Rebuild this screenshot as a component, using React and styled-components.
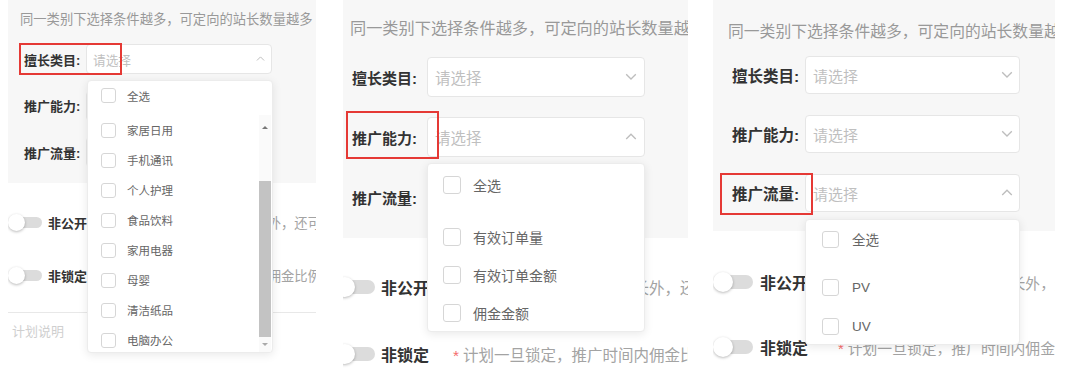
import React from 'react';
import styled, { createGlobalStyle } from 'styled-components';

const GlobalStyle = createGlobalStyle`
  html, body {
    margin: 0;
    padding: 0;
    background: #fff;
  }
  body {
    font-family: "Liberation Sans", "Noto Sans CJK SC", sans-serif;
  }
`;

// three screenshots of the same filter form, each at its own scale
const SMALL = {
  left: 8, width: 308, grayH: 183,
  hintTop: 10, hintLH: 20, hintSize: 13.3, hintPad: 12,
  rowsTop: 14, rowGap: 16.5, pad: 16, labelW: 62, labelSize: 13,
  selectW: 186, selectH: 30, selectPadL: 6, selectPadR: 6, phSize: 12.7, chevW: 9,
  swTop: 29, swGap: 33, swH: 20, swLeft: 0, tgW: 34, knob: 17, track: 11,
  swLabelGap: 6, swLabelSize: 13, swLabelW: 51, descSize: 13.3,
};

const MEDIUM = {
  left: 27, width: 345, grayH: 238,
  hintTop: 17, hintLH: 22, hintSize: 16.2, hintPad: 7,
  rowsTop: 18, rowGap: 20, pad: 9, labelW: 75, labelSize: 15,
  selectW: 218, selectH: 40, selectPadL: 7, selectPadR: 7, phSize: 15.5, chevW: 12,
  swTop: 37, swGap: 43, swH: 24, swLeft: -8, tgW: 40, knob: 20, track: 14,
  swLabelGap: 6, swLabelSize: 16, swLabelW: 72, descSize: 15.5,
};

const LARGE = {
  left: 25, width: 342, grayH: 231,
  hintTop: 21, hintLH: 22, hintSize: 15.8, hintPad: 15,
  rowsTop: 13, rowGap: 21, pad: 19, labelW: 73, labelSize: 15.5,
  selectW: 215, selectH: 38, selectPadL: 7, selectPadR: 6, phSize: 15, chevW: 12,
  swTop: 39, swGap: 41, swH: 24, swLeft: 0, tgW: 40, knob: 20, track: 14,
  swLabelGap: 7, swLabelSize: 16, swLabelW: 78, descSize: 14.8,
};

const LABELS = ['擅长类目:', '推广能力:', '推广流量:'];

const CATEGORIES = ['家居日用', '手机通讯', '个人护理', '食品饮料', '家用电器', '母婴', '清洁纸品', '电脑办公'];

const PANELS = [
  {
    m: SMALL,
    open: 0,
    hl: { left: -5, top: -1, w: 103, h: 32 },
    menu: { top: 80, left: 79, w: 186, h: 273, headH: 29, gap: 5, itemH: 30, box: 15, padL: 13, textGap: 11, font: 11.5 },
    options: CATEGORIES,
    scroll: true,
    note: true,
  },
  {
    m: MEDIUM,
    open: 1,
    hl: { left: -6, top: -6, w: 93, h: 48 },
    menu: { top: 163, left: 84, w: 218, h: 169, headH: 42, gap: 12, itemH: 38, box: 18, padL: 15, textGap: 12, font: 14 },
    options: ['有效订单量', '有效订单金额', '佣金金额'],
  },
  {
    m: LARGE,
    open: 2,
    hl: { left: -12, top: -1, w: 93, h: 42 },
    menu: { top: 219, left: 92, w: 215, h: 126, headH: 38, gap: 10, itemH: 39, box: 17, padL: 16, textGap: 13, font: 13.5 },
    options: ['PV', 'UV'],
  },
];

const SWITCHES = [
  { label: '非公开', desc: '计划非公开，除定向的站长外，还可以通过链接申请加入' },
  { label: '非锁定', desc: '计划一旦锁定，推广时间内佣金比例不可修改' },
];

const Screen = styled.div`
  display: flex;
  width: 1080px;
  height: 377px;
  overflow: hidden;
  background: #fff;
`;

const Panel = styled.div`
  position: relative;
  flex-shrink: 0;
  width: ${p => p.$m.width}px;
  height: 377px;
  margin-left: ${p => p.$m.left}px;
  overflow: hidden;
`;

const FilterBox = styled.div`
  box-sizing: border-box;
  height: ${p => p.$m.grayH}px;
  padding-top: ${p => p.$m.hintTop}px;
  background: #f7f7f7;
`;

const Hint = styled.div`
  padding-left: ${p => p.$m.hintPad}px;
  font-size: ${p => p.$m.hintSize}px;
  line-height: ${p => p.$m.hintLH}px;
  color: #999;
  white-space: nowrap;
`;

const Rows = styled.div`
  display: flex;
  flex-direction: column;
  gap: ${p => p.$m.rowGap}px;
  margin-top: ${p => p.$m.rowsTop}px;
  padding-left: ${p => p.$m.pad}px;
`;

const Row = styled.div`
  position: relative;
  display: flex;
  align-items: center;
  height: ${p => p.$m.selectH}px;
`;

const Label = styled.span`
  flex-shrink: 0;
  width: ${p => p.$m.labelW}px;
  font-size: ${p => p.$m.labelSize}px;
  font-weight: 600;
  color: #333;
  white-space: nowrap;
`;

const Select = styled.div`
  box-sizing: border-box;
  display: flex;
  align-items: center;
  justify-content: space-between;
  flex-shrink: 0;
  width: ${p => p.$m.selectW}px;
  height: 100%;
  padding: 0 ${p => p.$m.selectPadR}px 0 ${p => p.$m.selectPadL}px;
  background: #fff;
  border: 1px solid #e6e6e6;
  border-radius: 4px;
  font-size: ${p => p.$m.phSize}px;
  color: #bfbfbf;
`;

const Highlight = styled.span`
  position: absolute;
  left: ${p => p.$hl.left}px;
  top: ${p => p.$hl.top}px;
  width: ${p => p.$hl.w}px;
  height: ${p => p.$hl.h}px;
  box-sizing: border-box;
  border: 2px solid #e53935;
  pointer-events: none;
`;

const Switches = styled.div`
  display: flex;
  flex-direction: column;
  gap: ${p => p.$m.swGap}px;
  padding-top: ${p => p.$m.swTop}px;
  margin-left: ${p => p.$m.swLeft}px;
`;

const SwitchRow = styled.div`
  display: flex;
  align-items: center;
  height: ${p => p.$m.swH}px;
  white-space: nowrap;
`;

const Toggle = styled.span`
  position: relative;
  flex-shrink: 0;
  width: ${p => p.$m.tgW}px;
  height: ${p => p.$m.knob}px;

  &::before {
    content: '';
    position: absolute;
    left: ${p => Math.round(p.$m.knob * 0.4)}px;
    right: 0;
    top: ${p => (p.$m.knob - p.$m.track) / 2}px;
    height: ${p => p.$m.track}px;
    border-radius: ${p => p.$m.track / 2}px;
    background: #dcdcdc;
  }

  &::after {
    content: '';
    position: absolute;
    left: 0;
    top: 0;
    width: ${p => p.$m.knob}px;
    height: ${p => p.$m.knob}px;
    border-radius: 50%;
    background: #fff;
    box-shadow: 0 1px 3px rgba(0, 0, 0, 0.28);
  }
`;

const SwitchLabel = styled.span`
  flex-shrink: 0;
  width: ${p => p.$m.swLabelW}px;
  margin-left: ${p => p.$m.swLabelGap}px;
  font-size: ${p => p.$m.swLabelSize}px;
  font-weight: 600;
  color: #333;
`;

const Desc = styled.span`
  font-size: ${p => p.$m.descSize}px;
  color: #a3a3a3;
`;

const Star = styled.span`
  margin-right: 4px;
  color: #f56c6c;
`;

const Note = styled.div`
  margin-top: 27px;
  padding: 9px 4px 0;
  border-top: 1px solid #e8e8e8;
  font-size: 13px;
  line-height: 20px;
  color: #cfcfcf;
`;

const Menu = styled.div`
  position: absolute;
  top: ${p => p.$d.top}px;
  left: ${p => p.$d.left}px;
  width: ${p => p.$d.w}px;
  height: ${p => p.$d.h}px;
  box-sizing: border-box;
  display: flex;
  flex-direction: column;
  overflow: hidden;
  background: #fff;
  border: 1px solid #ececec;
  border-radius: 4px;
  box-shadow: 0 2px 10px rgba(0, 0, 0, 0.09);
`;

const Option = styled.div`
  display: flex;
  align-items: center;
  flex-shrink: 0;
  height: ${p => p.$h}px;
  padding-left: ${p => p.$d.padL}px;
`;

const Check = styled.span`
  box-sizing: border-box;
  flex-shrink: 0;
  width: ${p => p.$d.box}px;
  height: ${p => p.$d.box}px;
  margin-right: ${p => p.$d.textGap}px;
  border: 1px solid #d6d6d6;
  border-radius: 3px;
  background: #fff;
`;

const OptionText = styled.span`
  font-size: ${p => p.$d.font}px;
  color: #666;
`;

const ListArea = styled.div`
  display: flex;
  flex: 1;
  min-height: 0;
  margin-top: ${p => p.$d.gap}px;
`;

const List = styled.div`
  display: flex;
  flex-direction: column;
  flex: 1;
  overflow: hidden;
`;

const Scrollbar = styled.div`
  display: flex;
  flex-direction: column;
  width: 12px;
  margin-right: 1px;
  background: #fafafa;
`;

const ScrollArrow = styled.div`
  display: flex;
  align-items: center;
  justify-content: center;
  height: ${p => p.$h}px;

  &::before {
    content: '';
    border-left: 3px solid transparent;
    border-right: 3px solid transparent;
    ${p => (p.$down ? 'border-top: 3px solid #aaa;' : 'border-bottom: 3px solid #777;')}
  }
`;

const ScrollTrack = styled.div`
  display: flex;
  flex: 1;
  padding-top: 42px;
`;

const Thumb = styled.div`
  flex: 1;
  background: #c3c3c3;
`;

function Chevron({ up, w }) {
  return (
    <svg width={w} height={w * 0.6} viewBox="0 0 10 6" fill="none">
      <path d={up ? 'M1 5L5 1L9 5' : 'M1 1L5 5L9 1'} stroke="#bdbdbd" strokeWidth="1.1" />
    </svg>
  );
}

function Dropdown({ d, options, scroll }) {
  const items = options.map(o => (
    <Option key={o} $d={d} $h={d.itemH}>
      <Check $d={d} />
      <OptionText $d={d}>{o}</OptionText>
    </Option>
  ));
  return (
    <Menu $d={d}>
      <Option $d={d} $h={d.headH}>
        <Check $d={d} />
        <OptionText $d={d}>全选</OptionText>
      </Option>
      <ListArea $d={d}>
        <List>{items}</List>
        {scroll && (
          <Scrollbar>
            <ScrollArrow $h={24} />
            <ScrollTrack>
              <Thumb />
            </ScrollTrack>
            <ScrollArrow $h={15} $down />
          </Scrollbar>
        )}
      </ListArea>
    </Menu>
  );
}

function FormShot({ m, open, hl, menu, options, scroll, note }) {
  return (
    <Panel $m={m}>
      <FilterBox $m={m}>
        <Hint $m={m}>同一类别下选择条件越多，可定向的站长数量越多</Hint>
        <Rows $m={m}>
          {LABELS.map((label, i) => (
            <Row key={label} $m={m}>
              <Label $m={m}>{label}</Label>
              <Select $m={m}>
                <span>请选择</span>
                <Chevron up={i === open} w={m.chevW} />
              </Select>
              {i === open && <Highlight $hl={hl} />}
            </Row>
          ))}
        </Rows>
      </FilterBox>
      <Switches $m={m}>
        {SWITCHES.map(s => (
          <SwitchRow key={s.label} $m={m}>
            <Toggle $m={m} />
            <SwitchLabel $m={m}>{s.label}</SwitchLabel>
            <Desc $m={m}>
              <Star>*</Star>
              {s.desc}
            </Desc>
          </SwitchRow>
        ))}
      </Switches>
      {note && <Note>计划说明</Note>}
      <Dropdown d={menu} options={options} scroll={scroll} />
    </Panel>
  );
}

export default function App() {
  return (
    <>
      <GlobalStyle />
      <Screen>
        {PANELS.map((p, i) => (
          <FormShot key={i} {...p} />
        ))}
      </Screen>
    </>
  );
}
